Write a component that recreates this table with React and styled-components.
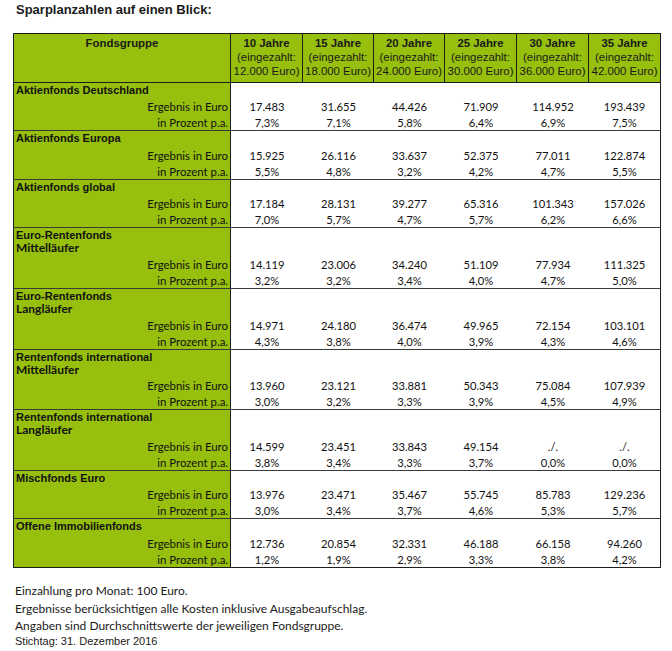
import styled, { createGlobalStyle } from 'styled-components';

const GREEN = '#97bf0d';
const LINE = '#1e1e1e';
const COLS = '217px 72px 71px 71px 72px 72px 71px';

const GlobalStyle = createGlobalStyle`
  html, body {
    margin: 0;
    background: #ffffff;
    color: #111111;
  }
`;

const Page = styled.div`
  width: 672px;
  height: 651px;
  padding-top: 2px;
  box-sizing: border-box;
`;

const Title = styled.h1`
  margin: 0 0 0 16px;
  font: bold 13px/15px 'Liberation Sans', Arial, sans-serif;
  color: #1a1a1a;
`;

const Table = styled.div`
  margin: 16px 0 0 13px;
  width: 648px;
  border: 1px solid ${LINE};
  box-sizing: border-box;
`;

const HeaderRow = styled.div`
  display: grid;
  grid-template-columns: ${COLS};
  height: 49px;
  border-bottom: 1px solid ${LINE};
  box-sizing: border-box;
`;

const HeaderCell = styled.div`
  background: ${GREEN};
  border-right: 1px solid ${LINE};
  display: flex;
  flex-direction: column;
  align-items: center;
  padding-top: 2px;
  min-width: 0;
  font: 11.4px/14px 'Liberation Sans', Arial, sans-serif;
  color: #1a1a1a;
  white-space: nowrap;

  &:last-child {
    border-right: none;
  }

  b {
    font-weight: bold;
  }
`;

const Group = styled.div`
  display: grid;
  grid-template-columns: ${COLS};
  height: ${(p) => p.$h}px;
  border-bottom: 1px solid #3a3a3a;
  box-sizing: border-box;

  &:last-child {
    border-bottom: none;
  }
`;

const LabelCol = styled.div`
  background: ${GREEN};
  border-right: 1px solid ${LINE};
  display: flex;
  flex-direction: column;
  padding: 0 2px;
`;

const Name = styled.div`
  flex: 1;
  padding-top: 1px;
  font: bold 11px/12px 'Liberation Sans', Arial, sans-serif;
  color: #111111;

  span {
    display: block;
    margin-top: 1px;
    font-family: Lato, 'Liberation Sans', sans-serif;
    font-size: 12px;
  }
`;

const RowLabel = styled.div`
  height: ${(p) => p.$h}px;
  line-height: ${(p) => p.$h}px;
  text-align: right;
  font-family: Lato, 'Liberation Sans', sans-serif;
  font-size: 11.4px;
  color: #111111;
`;

const ValueCol = styled.div`
  display: flex;
  flex-direction: column;
  justify-content: flex-end;
  text-align: center;
`;

const Value = styled.div`
  height: ${(p) => p.$h}px;
  line-height: ${(p) => p.$h}px;
  font-family: Lato, 'Liberation Sans', sans-serif;
  font-size: 11.2px;
  color: #111111;
`;

const Notes = styled.div`
  margin: 14px 0 0 15px;
`;

const Note = styled.div`
  font-family: ${(p) => (p.$arial ? "'Liberation Sans', Arial" : "Lato, 'Liberation Sans'")}, sans-serif;
  font-size: ${(p) => (p.$arial ? 11 : 12)}px;
  line-height: ${(p) => p.$lh}px;
  color: #1a1a1a;
`;

const years = [
  ['10 Jahre', '12.000 Euro)'],
  ['15 Jahre', '18.000 Euro)'],
  ['20 Jahre', '24.000 Euro)'],
  ['25 Jahre', '30.000 Euro)'],
  ['30 Jahre', '36.000 Euro)'],
  ['35 Jahre', '42.000 Euro)'],
];

const groups = [
  { name: 'Aktienfonds Deutschland', h: 48,
    euro: ['17.483', '31.655', '44.426', '71.909', '114.952', '193.439'],
    pct: ['7,3%', '7,1%', '5,8%', '6,4%', '6,9%', '7,5%'] },
  { name: 'Aktienfonds Europa', h: 49,
    euro: ['15.925', '26.116', '33.637', '52.375', '77.011', '122.874'],
    pct: ['5,5%', '4,8%', '3,2%', '4,2%', '4,7%', '5,5%'] },
  { name: 'Aktienfonds global', h: 48,
    euro: ['17.184', '28.131', '39.277', '65.316', '101.343', '157.026'],
    pct: ['7,0%', '5,7%', '4,7%', '5,7%', '6,2%', '6,6%'] },
  { name: 'Euro-Rentenfonds', sub: 'Mittelläufer', h: 61,
    euro: ['14.119', '23.006', '34.240', '51.109', '77.934', '111.325'],
    pct: ['3,2%', '3,2%', '3,4%', '4,0%', '4,7%', '5,0%'] },
  { name: 'Euro-Rentenfonds', sub: 'Langläufer', h: 61,
    euro: ['14.971', '24.180', '36.474', '49.965', '72.154', '103.101'],
    pct: ['4,3%', '3,8%', '4,0%', '3,9%', '4,3%', '4,6%'] },
  { name: 'Rentenfonds international', sub: 'Mittelläufer', h: 60,
    euro: ['13.960', '23.121', '33.881', '50.343', '75.084', '107.939'],
    pct: ['3,0%', '3,2%', '3,3%', '3,9%', '4,5%', '4,9%'] },
  { name: 'Rentenfonds international', sub: 'Langläufer', h: 61,
    euro: ['14.599', '23.451', '33.843', '49.154', './.', './.'],
    pct: ['3,8%', '3,4%', '3,3%', '3,7%', '0,0%', '0,0%'] },
  { name: 'Mischfonds Euro', h: 48,
    euro: ['13.976', '23.471', '35.467', '55.745', '85.783', '129.236'],
    pct: ['3,0%', '3,4%', '3,7%', '4,6%', '5,3%', '5,7%'] },
  { name: 'Offene Immobilienfonds', h: 48,
    euro: ['12.736', '20.854', '32.331', '46.188', '66.158', '94.260'],
    pct: ['1,2%', '1,9%', '2,9%', '3,3%', '3,8%', '4,2%'] },
];

export default function App() {
  return (
    <Page>
      <GlobalStyle />
      <Title>Sparplanzahlen auf einen Blick:</Title>

      <Table>
        <HeaderRow>
          <HeaderCell><b>Fondsgruppe</b></HeaderCell>
          {years.map(([y, sum]) => (
            <HeaderCell key={y}>
              <b>{y}</b>
              <div>(eingezahlt:</div>
              <div>{sum}</div>
            </HeaderCell>
          ))}
        </HeaderRow>

        {groups.map((g, i) => (
          <Group key={i} $h={g.h}>
            <LabelCol>
              <Name>
                {g.name}
                {g.sub && <span>{g.sub}</span>}
              </Name>
              <RowLabel $h={16}>Ergebnis in Euro</RowLabel>
              <RowLabel $h={15}>in Prozent p.a.</RowLabel>
            </LabelCol>
            {g.euro.map((v, j) => (
              <ValueCol key={j}>
                <Value $h={16}>{v}</Value>
                <Value $h={15}>{g.pct[j]}</Value>
              </ValueCol>
            ))}
          </Group>
        ))}
      </Table>

      {/* Fußnoten unter der Tabelle */}
      <Notes>
        <Note $lh={17.5}>Einzahlung pro Monat: 100 Euro.</Note>
        <Note $lh={17.5}>Ergebnisse berücksichtigen alle Kosten inklusive Ausgabeaufschlag.</Note>
        <Note $lh={17.5}>Angaben sind Durchschnittswerte der jeweiligen Fondsgruppe.</Note>
        <Note $lh={12} $arial>Stichtag: 31. Dezember 2016</Note>
      </Notes>
    </Page>
  );
}
